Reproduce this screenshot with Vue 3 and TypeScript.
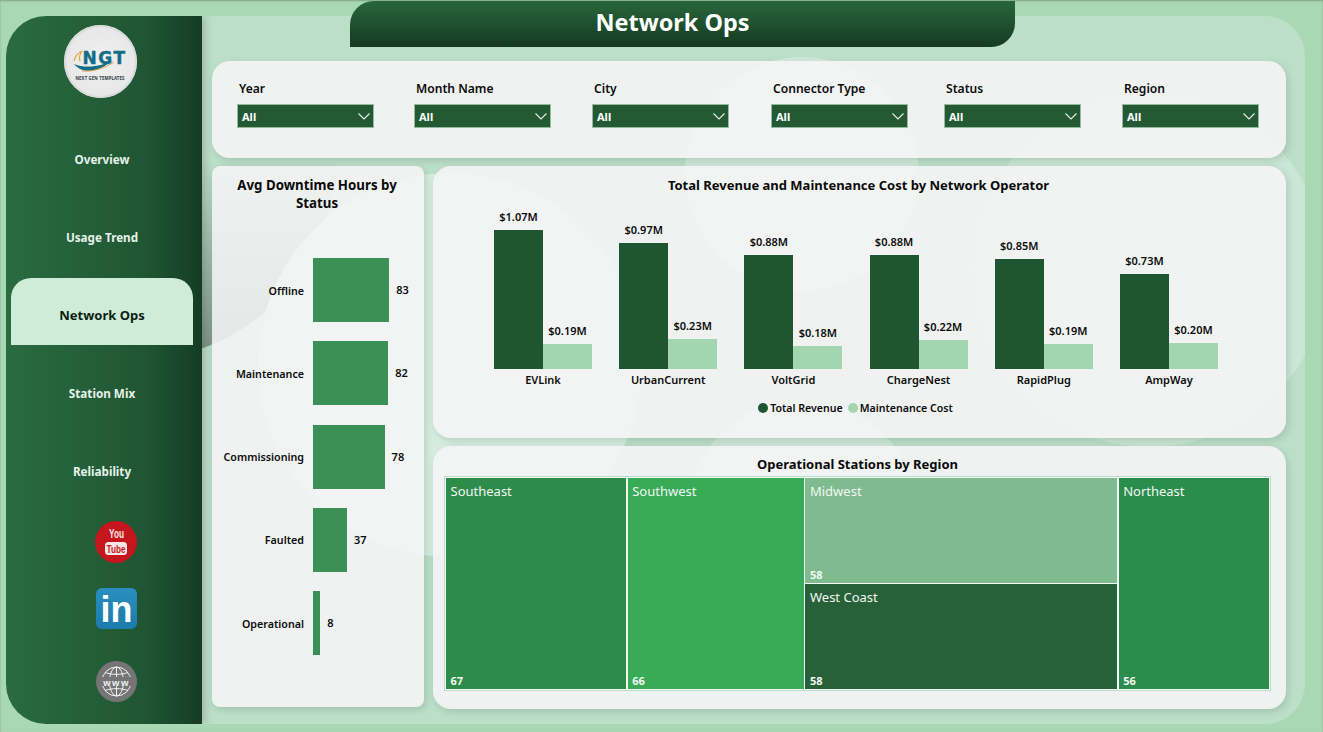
<template>
  <div class="page">
    <div class="shell">
      <div class="blob blob-dark" />
      <div class="blob blob-a" />
      <div class="blob blob-b" />
      <div class="blob blob-c" />
      <div class="blob blob-d" />

      <!-- Sidebar -->
      <aside class="sidebar">
        <div class="logo">
          <svg class="logo-swoosh" width="60" height="34" viewBox="0 0 60 34" fill="none">
            <path d="M5 17C6 12 9 9 13 7C10 11 10 14 11 17" stroke="#e0a93f" stroke-width="1.2" />
            <path d="M5 20C14 31 30 28 44 16C34 22 17 25 5 20Z" fill="#156c86" />
            <path d="M13 27C25 28 36 24 45 18" stroke="#e0a93f" stroke-width="1" />
          </svg>
          <span class="logo-mark">NGT</span>
          <span class="logo-sub">NEXT GEN TEMPLATES</span>
        </div>
        <nav class="nav">
          <div
            v-for="item in navItems"
            :key="item"
            class="nav-item"
            :class="{ active: item === 'Network Ops' }"
          >
            {{ item }}
          </div>
        </nav>
        <div class="socials">
          <svg width="42" height="42" viewBox="0 0 42 42">
            <circle cx="21" cy="21" r="21" fill="#c4161c" />
            <text x="21.5" y="17" class="yt-you" textLength="15" lengthAdjust="spacingAndGlyphs">You</text>
            <rect x="10" y="21" width="22" height="13" rx="3.5" fill="#f6e6e6" />
            <text x="21" y="32" class="yt-tube" textLength="19" lengthAdjust="spacingAndGlyphs">Tube</text>
          </svg>
          <svg width="41" height="41" viewBox="0 0 41 41">
            <defs>
              <linearGradient id="liGrad" x1="0" y1="0" x2="0" y2="1">
                <stop offset="0" stop-color="#2a8fc0" />
                <stop offset="1" stop-color="#1c7bab" />
              </linearGradient>
            </defs>
            <rect width="41" height="41" rx="6" fill="url(#liGrad)" />
            <text x="20.5" y="34" class="li-text">in</text>
          </svg>
          <svg width="41" height="41" viewBox="0 0 41 41" fill="none">
            <circle cx="20.5" cy="20.5" r="20.5" fill="#757575" />
            <g stroke="#f1f1f1" stroke-width="1">
              <circle cx="20.5" cy="20.5" r="14.5" />
              <ellipse cx="20.5" cy="20.5" rx="7" ry="14.5" />
              <path d="M20.5 6v29M9 11.5C16 14 25 14 32 11.5M9 29.5C16 27 25 27 32 29.5" />
            </g>
            <rect x="3" y="16" width="35" height="9" fill="#757575" />
            <text x="20.5" y="24.5" class="www-text">www</text>
          </svg>
        </div>
      </aside>

      <!-- Main area -->
      <main class="main">
        <section class="card filters">
          <div v-for="f in filters" :key="f" class="filter">
            <label class="filter-label">{{ f }}</label>
            <div class="select">
              <span>All</span>
              <svg width="12" height="7" viewBox="0 0 12 7" fill="none">
                <path d="M0.5 0.5L6 6L11.5 0.5" stroke="#e8efe9" stroke-width="1.1" />
              </svg>
            </div>
          </div>
        </section>

        <div class="content">
          <section class="card downtime">
            <h2 class="card-title downtime-title">Avg Downtime Hours by Status</h2>
            <div class="hbars">
              <div v-for="row in downtime" :key="row.status" class="hbar-row">
                <span class="hbar-label">{{ row.status }}</span>
                <div class="hbar" :style="{ width: row.value * 0.918 + 'px' }" />
                <span class="hbar-value">{{ row.value }}</span>
              </div>
            </div>
          </section>

          <div class="right-col">
            <section class="card revenue">
              <h2 class="card-title">Total Revenue and Maintenance Cost by Network Operator</h2>
              <div class="columns">
                <div v-for="op in operators" :key="op.name" class="col-group">
                  <div class="col-bars">
                    <div class="col-wrap">
                      <span class="col-value">${{ op.revenue.toFixed(2) }}M</span>
                      <div class="col col-dark" :style="{ height: op.revenue * 130 + 'px' }" />
                    </div>
                    <div class="col-wrap">
                      <span class="col-value">${{ op.cost.toFixed(2) }}M</span>
                      <div class="col col-light" :style="{ height: op.cost * 130 + 'px' }" />
                    </div>
                  </div>
                  <span class="col-name">{{ op.name }}</span>
                </div>
              </div>
              <div class="legend">
                <i class="dot dot-dark" /><span>Total Revenue</span>
                <i class="dot dot-light" /><span>Maintenance Cost</span>
              </div>
            </section>

            <section class="card regions">
              <h2 class="card-title">Operational Stations by Region</h2>
              <div class="treemap">
                <div
                  v-for="cell in regions"
                  :key="cell.name"
                  class="tile"
                  :class="cell.cls"
                >
                  <span class="tile-name">{{ cell.name }}</span>
                  <span class="tile-value">{{ cell.value }}</span>
                </div>
              </div>
            </section>
          </div>
        </div>
      </main>
    </div>

    <header class="title-bar">Network Ops</header>
  </div>
</template>

<script setup lang="ts">
interface Operator {
  name: string
  revenue: number
  cost: number
}

const navItems = ['Overview', 'Usage Trend', 'Network Ops', 'Station Mix', 'Reliability']
const filters = ['Year', 'Month Name', 'City', 'Connector Type', 'Status', 'Region']

const downtime = [
  { status: 'Offline', value: 83 },
  { status: 'Maintenance', value: 82 },
  { status: 'Commissioning', value: 78 },
  { status: 'Faulted', value: 37 },
  { status: 'Operational', value: 8 },
]

const operators: Operator[] = [
  { name: 'EVLink', revenue: 1.07, cost: 0.19 },
  { name: 'UrbanCurrent', revenue: 0.97, cost: 0.23 },
  { name: 'VoltGrid', revenue: 0.88, cost: 0.18 },
  { name: 'ChargeNest', revenue: 0.88, cost: 0.22 },
  { name: 'RapidPlug', revenue: 0.85, cost: 0.19 },
  { name: 'AmpWay', revenue: 0.73, cost: 0.2 },
]

const regions = [
  { name: 'Southeast', value: 67, cls: 'tile-se' },
  { name: 'Southwest', value: 66, cls: 'tile-sw' },
  { name: 'Midwest', value: 58, cls: 'tile-mw' },
  { name: 'West Coast', value: 58, cls: 'tile-wc' },
  { name: 'Northeast', value: 56, cls: 'tile-ne' },
]
</script>

<style>
html,
body {
  margin: 0;
  background: #a9d8b5;
}
</style>

<style scoped>
.page {
  position: relative;
  width: 1323px;
  height: 732px;
  overflow: hidden;
  box-sizing: border-box;
  padding: 16px 18px 8px 6px;
  background: #a9d8b5;
  box-shadow: inset 0 1px 2px rgba(0, 0, 0, 0.25);
  font-family: "Noto Sans", "Open Sans", sans-serif;
  color: #0c0c0c;
}

.shell {
  position: relative;
  display: flex;
  height: 100%;
  overflow: hidden;
  border-radius: 40px;
  background: #bcdfca;
}

.blob {
  position: absolute;
  border-radius: 50%;
  background: rgba(255, 255, 255, 0.3);
}
.blob-dark {
  left: -71px;
  top: -56px;
  width: 400px;
  height: 400px;
  background: linear-gradient(to bottom, transparent 50%, rgba(70, 80, 75, 0.55) 100%);
}
.blob-a {
  left: 252px;
  top: 157px;
  width: 384px;
  height: 384px;
  background: #d6ecdf;
}
.blob-b {
  left: 679px;
  top: 41px;
  width: 234px;
  height: 234px;
}
.blob-c {
  left: 967px;
  top: 77px;
  width: 354px;
  height: 354px;
  background: rgba(255, 255, 255, 0.22);
}
.blob-d {
  left: 681px;
  top: 384px;
  width: 230px;
  height: 230px;
}

.sidebar {
  position: relative;
  z-index: 2;
  flex: 0 0 196px;
  display: flex;
  flex-direction: column;
  align-items: center;
  padding-top: 9px;
  box-sizing: border-box;
  background: linear-gradient(to right, #2a6b40 0%, #235c37 50%, #1f5532 72%, #143d23 100%);
  box-shadow: 3px 0 8px rgba(0, 0, 0, 0.18);
}

.logo {
  position: relative;
  width: 73px;
  height: 73px;
  margin-left: -8px;
  flex-shrink: 0;
  border-radius: 50%;
  background: radial-gradient(circle, #f0f0f0 0%, #e6e6e6 80%, #d4d6d5 100%);
  box-shadow: inset 0 0 0 2px #d9dbda;
  display: flex;
  flex-direction: column;
  align-items: center;
  overflow: hidden;
}
.logo-swoosh {
  position: absolute;
  left: 5px;
  top: 19px;
}
.logo-mark {
  position: relative;
  margin-top: 23.5px;
  margin-left: 9px;
  font-family: "DejaVu Sans", sans-serif;
  font-weight: 700;
  font-size: 17px;
  line-height: 18px;
  letter-spacing: 1.5px;
  color: #156c86;
  -webkit-text-stroke: 0.4px #156c86;
}
.logo-sub {
  position: relative;
  margin-top: 9px;
  font-size: 4.3px;
  line-height: 5px;
  font-weight: 700;
  white-space: nowrap;
  color: #2b3a44;
  letter-spacing: 0.15px;
}

.nav {
  align-self: stretch;
  margin-top: 22px;
  display: flex;
  flex-direction: column;
}
.nav-item {
  height: 78px;
  display: flex;
  align-items: center;
  justify-content: center;
  padding-right: 4px;
  font-size: 11.7px;
  font-weight: 700;
  color: #e6f2e9;
}
.nav-item.active {
  box-sizing: border-box;
  height: 67px;
  margin: 2px 9px 9px 5px;
  padding: 7px 0 0;
  border-radius: 20px 20px 0 0;
  background: #cfecd9;
  font-size: 13px;
  color: #0d1f14;
}

.socials {
  display: flex;
  flex-direction: column;
  align-items: center;
  margin-top: 11px;
  margin-left: 24px;
  gap: 25px;
}
.socials svg:last-child {
  margin-top: 7px;
}
.yt-you,
.yt-tube {
  text-anchor: middle;
  font-family: "Liberation Sans", sans-serif;
  font-weight: 700;
  font-size: 13px;
}
.yt-you {
  fill: #f6e6e6;
}
.yt-tube {
  font-size: 11.5px;
  fill: #c4161c;
}
.li-text {
  text-anchor: middle;
  font-family: "Liberation Sans", sans-serif;
  font-weight: 700;
  font-size: 36px;
  fill: #fff;
}
.www-text {
  text-anchor: middle;
  font-family: "Liberation Sans", sans-serif;
  font-weight: 700;
  font-size: 9.5px;
  letter-spacing: 1.5px;
  fill: #f1f1f1;
}

.main {
  position: relative;
  z-index: 1;
  flex: 1;
  min-width: 0;
  display: flex;
  flex-direction: column;
  gap: 8px;
  padding: 45px 19px 15px 10px;
}

.card {
  background: rgba(247, 245, 247, 0.86);
  box-shadow: 2px 3px 7px rgba(40, 70, 50, 0.16);
  border-radius: 18px;
}

.filters {
  flex: 0 0 97px;
  box-sizing: border-box;
  display: flex;
  padding: 19px 0 0 25px;
}
.filter {
  width: 137px;
  margin-left: 40px;
}
.filter:first-child {
  margin-left: 0;
}
.filter:nth-child(3) {
  margin-left: 41px;
}
.filter:nth-child(4) {
  margin-left: 42px;
}
.filter:nth-child(5) {
  margin-left: 36px;
}
.filter:nth-child(6) {
  margin-left: 41px;
}
.filter-label {
  display: block;
  padding-left: 2px;
  font-size: 12.1px;
  line-height: 18px;
  font-weight: 600;
  white-space: nowrap;
}
.select {
  box-sizing: border-box;
  height: 24px;
  margin-top: 6px;
  display: flex;
  align-items: center;
  justify-content: space-between;
  padding: 0 3px 0 4px;
  background: #235a34;
  border: 1.5px solid #96b8a1;
  color: #fff;
  font-size: 11px;
  font-weight: 700;
}

.content {
  flex: 1;
  min-height: 0;
  display: flex;
  gap: 9px;
}

.card-title {
  margin: 0;
  text-align: center;
  font-size: 13px;
  line-height: 18px;
  font-weight: 700;
  color: #0a0a0a;
}

.downtime {
  flex: 0 0 212px;
  box-sizing: border-box;
  height: 541px;
  padding-top: 10px;
  border-radius: 8px;
}
.downtime-title {
  padding: 0 20px 0 18px;
  font-size: 13.3px;
}
.hbars {
  margin-top: 46px;
  display: flex;
  flex-direction: column;
  gap: 19.25px;
}
.hbar-row {
  display: flex;
  align-items: center;
  height: 64px;
}
.hbar-label {
  flex: 0 0 92px;
  margin-right: 9px;
  padding-top: 1px;
  text-align: right;
  font-size: 10.7px;
  font-weight: 600;
}
.hbar {
  height: 64px;
  background: #3b9155;
}
.hbar-value {
  margin-left: 7px;
  padding-bottom: 1px;
  font-size: 11px;
  font-weight: 600;
}

.right-col {
  flex: 1;
  min-width: 0;
  display: flex;
  flex-direction: column;
  gap: 8px;
}

.revenue {
  flex: 0 0 272px;
  box-sizing: border-box;
  padding: 10px 2px 0 0;
}
.columns {
  display: flex;
  align-items: flex-end;
  gap: 27.2px;
  margin-top: 11px;
  padding-left: 61px;
}
.col-group {
  width: 98px;
  display: flex;
  flex-direction: column;
  align-items: center;
}
.col-bars {
  width: 100%;
  height: 164px;
  display: flex;
  align-items: flex-end;
}
.col-wrap {
  flex: 1;
  display: flex;
  flex-direction: column;
  align-items: center;
}
.col-value {
  margin-bottom: 5px;
  font-size: 11px;
  line-height: 16px;
  font-weight: 600;
  white-space: nowrap;
}
.col {
  width: 100%;
}
.col-dark {
  background: #1f5632;
}
.col-light {
  background: #a2d5b0;
}
.col-name {
  margin-top: 3px;
  font-size: 11px;
  line-height: 16px;
  font-weight: 600;
  white-space: nowrap;
}
.legend {
  display: flex;
  align-items: center;
  justify-content: center;
  margin-top: 12px;
  padding-right: 6px;
  font-size: 10.6px;
  line-height: 16px;
  font-weight: 600;
}
.dot {
  width: 10px;
  height: 10px;
  border-radius: 50%;
  margin-right: 2px;
}
.dot-dark {
  background: #1f5632;
}
.dot-light {
  margin-left: 5px;
  background: #a2d5b0;
}

.regions {
  flex: 0 0 263px;
  box-sizing: border-box;
  padding: 9px 16px 0 12px;
}
.treemap {
  box-sizing: border-box;
  height: 213px;
  margin-top: 4px;
  display: grid;
  grid-template-columns: 181fr 177fr 313fr 151fr;
  grid-template-rows: 1fr 1fr;
  gap: 1.5px;
  padding: 1px;
  background: #f4f8f5;
  box-shadow: 0 0 0 1px #bcdfca;
}
.tile {
  display: flex;
  flex-direction: column;
  justify-content: space-between;
  padding: 4px 5px 1px 4.5px;
  color: #f1f7f2;
}
.tile-name {
  font-size: 13px;
  line-height: 18px;
}
.tile-value {
  font-size: 11px;
  line-height: 14px;
  font-weight: 700;
}
.tile-se {
  grid-row: 1 / 3;
  background: #2e8c4a;
}
.tile-sw {
  grid-row: 1 / 3;
  background: #37ab58;
}
.tile-mw {
  background: #7fbb8f;
}
.tile-wc {
  grid-column: 3;
  grid-row: 2;
  background: #276139;
}
.tile-ne {
  grid-column: 4;
  grid-row: 1 / 3;
  background: #2b8d4b;
}

.title-bar {
  position: absolute;
  left: 350px;
  top: 1px;
  width: 665px;
  height: 46px;
  z-index: 3;
  display: flex;
  align-items: center;
  justify-content: center;
  padding: 0 20px 4px 0;
  box-sizing: border-box;
  border-radius: 24px 0 24px 0;
  background: linear-gradient(to bottom, #28663c, #153a21);
  color: #fff;
  font-size: 23.4px;
  font-weight: 700;
}
</style>
